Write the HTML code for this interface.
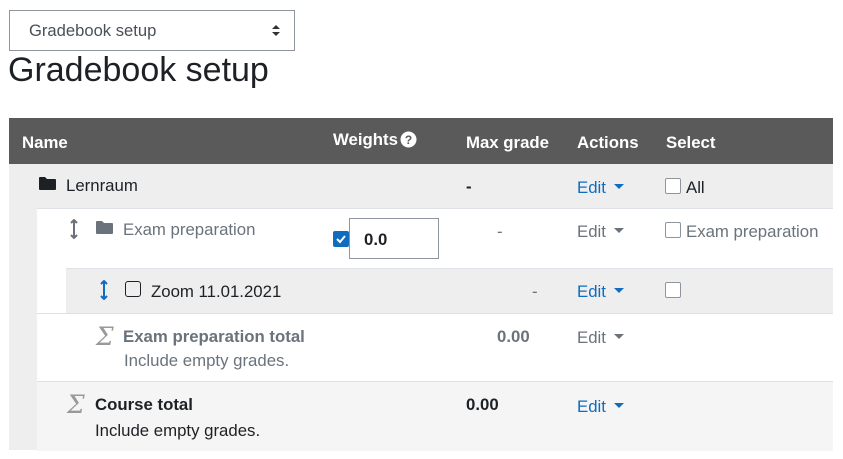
<!DOCTYPE html>
<html><head><style>
body{margin:0;width:843px;height:459px;background:#fff;font-family:"Liberation Sans",sans-serif;position:relative;overflow:hidden;color:#1d2125}
.a{position:absolute;white-space:nowrap}
.bg{position:absolute}
.blue{color:#0f6cbf}
.grey{color:#6a737b}
.cb{position:absolute;border:1.5px solid #8f959e;border-radius:2px;background:#fff;box-sizing:border-box;width:16px;height:16px}
.car{display:inline-block;width:0;height:0;border-left:5px solid transparent;border-right:5px solid transparent;border-top:5px solid currentColor;vertical-align:middle;margin-left:8px;position:relative;top:-2px}
.f{font-size:16.8px}
</style></head><body>
<div class="bg" style="left:9px;top:10px;width:284px;height:39px;border:1px solid #8f959e"></div>
<div class="a" style="left:29px;top:21px;color:#495057;font-size:16.6px">Gradebook setup</div>
<svg class="a" style="left:271px;top:24px" width="10" height="13"><path d="M1 5L5 1L9 5Z M1 8L5 12L9 8Z" fill="#333"/></svg>
<div class="a" style="left:8px;top:51px;font-size:34px">Gradebook setup</div>

<div class="bg" style="left:9px;top:118px;width:824px;height:46px;background:#5a5a5a"></div>
<div class="a f" style="left:22px;top:133px;color:#fff;font-weight:bold">Name</div>
<div class="a f" style="left:333px;top:130px;color:#fff;font-weight:bold">Weights</div>
<svg class="a" style="left:400px;top:131px" width="17" height="17"><circle cx="8.5" cy="8.5" r="8" fill="#fff"/><text x="8.5" y="13" text-anchor="middle" font-size="12" font-weight="bold" font-family="Liberation Sans" fill="#5a5a5a">?</text></svg>
<div class="a f" style="left:466px;top:133px;color:#fff;font-weight:bold">Max grade</div>
<div class="a f" style="left:577px;top:133px;color:#fff;font-weight:bold">Actions</div>
<div class="a f" style="left:666px;top:133px;color:#fff;font-weight:bold">Select</div>

<div class="bg" style="left:9px;top:164px;width:824px;height:286px;background:#eeeeee"></div>
<svg class="a" style="left:38px;top:176px" width="19" height="15"><path d="M1 2Q1 1 2 1H7L9 3H17Q18 3 18 4V13Q18 14 17 14H2Q1 14 1 13Z" fill="#1d2125"/></svg>
<div class="a f" style="left:66px;top:176px">Lernraum</div>
<div class="a f" style="left:466px;top:177px;font-weight:bold">-</div>
<div class="a f blue" style="left:577px;top:178px">Edit<span class="car"></span></div>
<div class="cb" style="left:665px;top:178px"></div>
<div class="a f" style="left:686px;top:178px">All</div>

<div class="bg" style="left:37px;top:208px;width:796px;height:242px;background:#fff;border-top:1px solid #dee2e6"></div>
<svg class="a" style="left:70px;top:219px" width="8" height="20"><path d="M4 1V19M1 4L4 1L7 4M1 16L4 19L7 16" stroke="#6a737b" stroke-width="2" fill="none"/></svg>
<svg class="a" style="left:95px;top:220px" width="19" height="15"><path d="M1 2Q1 1 2 1H7L9 3H17Q18 3 18 4V13Q18 14 17 14H2Q1 14 1 13Z" fill="#6a737b"/></svg>
<div class="a f grey" style="left:123px;top:220px">Exam preparation</div>
<div class="bg" style="left:333px;top:231px;width:16px;height:16px;background:#0f6cbf;border-radius:2px"></div>
<svg class="a" style="left:333px;top:231px" width="16" height="16"><path d="M4 8L7 11L12 5" stroke="#fff" stroke-width="2" fill="none"/></svg>
<div class="bg" style="left:349px;top:218px;width:88px;height:39px;border:1px solid #8f959e;background:#fff"></div>
<div class="a f" style="left:364px;top:230px;font-weight:bold">0.0</div>
<div class="a f grey" style="left:497px;top:222px">-</div>
<div class="a f grey" style="left:577px;top:222px">Edit<span class="car"></span></div>
<div class="cb" style="left:665px;top:222px"></div>
<div class="a f grey" style="left:686px;top:222px">Exam preparation</div>

<div class="bg" style="left:66px;top:268px;width:767px;height:45px;background:#eeeeee;border-top:1px solid #dee2e6"></div>
<svg class="a" style="left:100px;top:280px" width="8" height="20"><path d="M4 1V19M1 4L4 1L7 4M1 16L4 19L7 16" stroke="#0f6cbf" stroke-width="2" fill="none"/></svg>
<div class="bg" style="left:125px;top:281px;width:16px;height:16px;border:1.5px solid #1d2125;border-radius:3px;box-sizing:border-box"></div>
<div class="a f" style="left:151px;top:282px">Zoom 11.01.2021</div>
<div class="a f grey" style="left:532px;top:282px">-</div>
<div class="a f blue" style="left:577px;top:282px">Edit<span class="car"></span></div>
<div class="cb" style="left:665px;top:282px"></div>

<div class="bg" style="left:37px;top:313px;width:796px;height:68px;background:#fff;border-top:1px solid #dee2e6"></div>
<div class="a" style="left:96px;top:322px;font-size:25px;font-style:italic;color:#999;font-family:'DejaVu Serif',serif">Σ</div>
<div class="a f grey" style="left:123px;top:327px;font-weight:bold">Exam preparation total</div>
<div class="a f grey" style="left:124px;top:351px">Include empty grades.</div>
<div class="a f grey" style="left:497px;top:327px;font-weight:bold">0.00</div>
<div class="a f grey" style="left:577px;top:328px">Edit<span class="car"></span></div>

<div class="bg" style="left:37px;top:381px;width:796px;height:69px;background:#f5f5f5;border-top:1px solid #dee2e6"></div>
<div class="a" style="left:67px;top:390px;font-size:25px;font-style:italic;color:#999;font-family:'DejaVu Serif',serif">Σ</div>
<div class="a f" style="left:95px;top:395px;font-weight:bold">Course total</div>
<div class="a f" style="left:95px;top:421px">Include empty grades.</div>
<div class="a f" style="left:466px;top:395px;font-weight:bold">0.00</div>
<div class="a f blue" style="left:577px;top:397px">Edit<span class="car"></span></div>
</body></html>
